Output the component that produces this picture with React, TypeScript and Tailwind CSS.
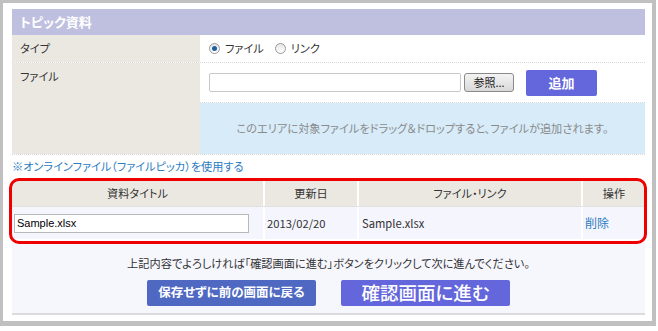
import React from 'react';

const jp = "font-['Noto_Sans_CJK_JP','Noto_Sans',sans-serif] [font-feature-settings:'palt']";

function Radio({ checked }: { checked?: boolean }) {
  return (
    <span className="inline-flex h-[11px] w-[11px] items-center justify-center rounded-full border border-[#9a9a9a] bg-gradient-to-b from-[#e6e6e6] to-[#ffffff]">
      {checked && <span className="h-[5px] w-[5px] rounded-full bg-[#1d5f9e]" />}
    </span>
  );
}

export default function App() {
  return (
    <div className={`h-[331px] w-[658px] bg-white text-[11.2px] text-[#333] ${jp}`}>
      <div className="h-[326px] w-[656px] border-b-[5px] border-l-[3px] border-r-[4px] border-t-[3px] border-[#c0c0c0] pl-[9px] pr-[7px] pt-[6px]">
        {/* header */}
        <div className="flex h-[26px] items-center bg-[#bfc0e0] pl-2 text-[13px] font-bold text-white">トピック資料</div>

        {/* type row */}
        <div className="flex h-[28px] border-b border-dotted border-[#d8d8d8]">
          <div className="flex w-[188px] items-center bg-[#ebe8e2] pl-2">タイプ</div>
          <div className="flex items-center gap-[5px] pl-[9px]">
            <Radio checked />
            <span className="mr-[6px]">ファイル</span>
            <Radio />
            <span>リンク</span>
          </div>
        </div>

        {/* file row */}
        <div className="flex border-b border-dotted border-[#d8d8d8]">
          <div className="w-[188px] bg-[#ebe8e2] pl-2 pt-[5px]">ファイル</div>
          <div className="flex-1">
            <div className="flex h-[40px] items-center border-b border-dotted border-[#d8d8d8] pl-[9px]">
              <div className="h-[19px] w-[252px] rounded-[2px] border border-[#c8c8c8] bg-white" />
              <div className="ml-[3px] flex h-[19px] w-[50px] items-center justify-center rounded-[3px] border border-[#8a8a8a] bg-gradient-to-b from-[#f4f4f4] to-[#d8d8d8] text-[11px] text-[#222]">
                参照...
              </div>
              <div className="ml-[12px] flex h-[26px] w-[71px] items-center justify-center rounded-[2px] bg-[#6467db] text-[13px] font-bold text-white">
                追加
              </div>
            </div>
            <div className="flex h-[51px] items-center justify-center bg-[#d7ebf9] text-[#8a8a8a]">
              このエリアに対象ファイルをドラッグ＆ドロップすると、ファイルが追加されます。
            </div>
          </div>
        </div>

        {/* link */}
        <div className="flex h-[22px] items-center text-[#2b7bbf]">※オンラインファイル（ファイルピッカ）を使用する</div>

        {/* table with red highlight */}
        <div className="relative mt-[4px]">
          <div className="pointer-events-none absolute -bottom-[5px] -left-[3px] -right-[2px] -top-[3px] rounded-[10px] border-[3px] border-[#ee0000]" />
          <div className="flex h-[26px] border-b border-dotted border-[#d8d8d8] bg-[#ebe8e2]">
            <div className="flex w-[253px] items-center justify-center border-r-2 border-white">資料タイトル</div>
            <div className="flex w-[94px] items-center justify-center border-r-2 border-white">更新日</div>
            <div className="flex w-[224px] items-center justify-center border-r-2 border-white">ファイル・リンク</div>
            <div className="flex flex-1 items-center justify-center">操作</div>
          </div>
          <div className="flex h-[32px] bg-[#f4f5fd]">
            <div className="flex w-[253px] items-center border-r-2 border-white pl-[2px]">
              <div className="flex h-[19px] w-[235px] items-center border border-[#b8b8b8] bg-white pl-[2px] font-['Liberation_Sans',sans-serif] text-[11px] text-black">
                Sample.xlsx
              </div>
            </div>
            <div className="flex w-[94px] items-center border-r-2 border-white pl-[2px]">2013/02/20</div>
            <div className="flex w-[224px] items-center border-r-2 border-white pl-[3px]">Sample.xlsx</div>
            <div className="flex flex-1 items-center pl-[2px] text-[12px] text-[#2b7bbf]">削除</div>
          </div>
        </div>

        {/* bottom */}
        <div className="mt-[4px] flex h-[72px] flex-col items-center border-b-2 border-[#dcdcdc] bg-[#f6f6fd] pt-[12px]">
          <div>上記内容でよろしければ「確認画面に進む」ボタンをクリックして次に進んでください。</div>
          <div className="mt-[8px] flex gap-[25px]">
            <div className="flex h-[26px] w-[169px] items-center justify-center rounded-[2px] bg-[#4f69c2] text-[12.5px] font-bold text-white">
              保存せずに前の画面に戻る
            </div>
            <div className="flex h-[26px] w-[169px] items-center justify-center rounded-[2px] bg-[#6467db] text-[18.5px] font-medium text-white">
              確認画面に進む
            </div>
          </div>
        </div>
      </div>
    </div>
  );
}
